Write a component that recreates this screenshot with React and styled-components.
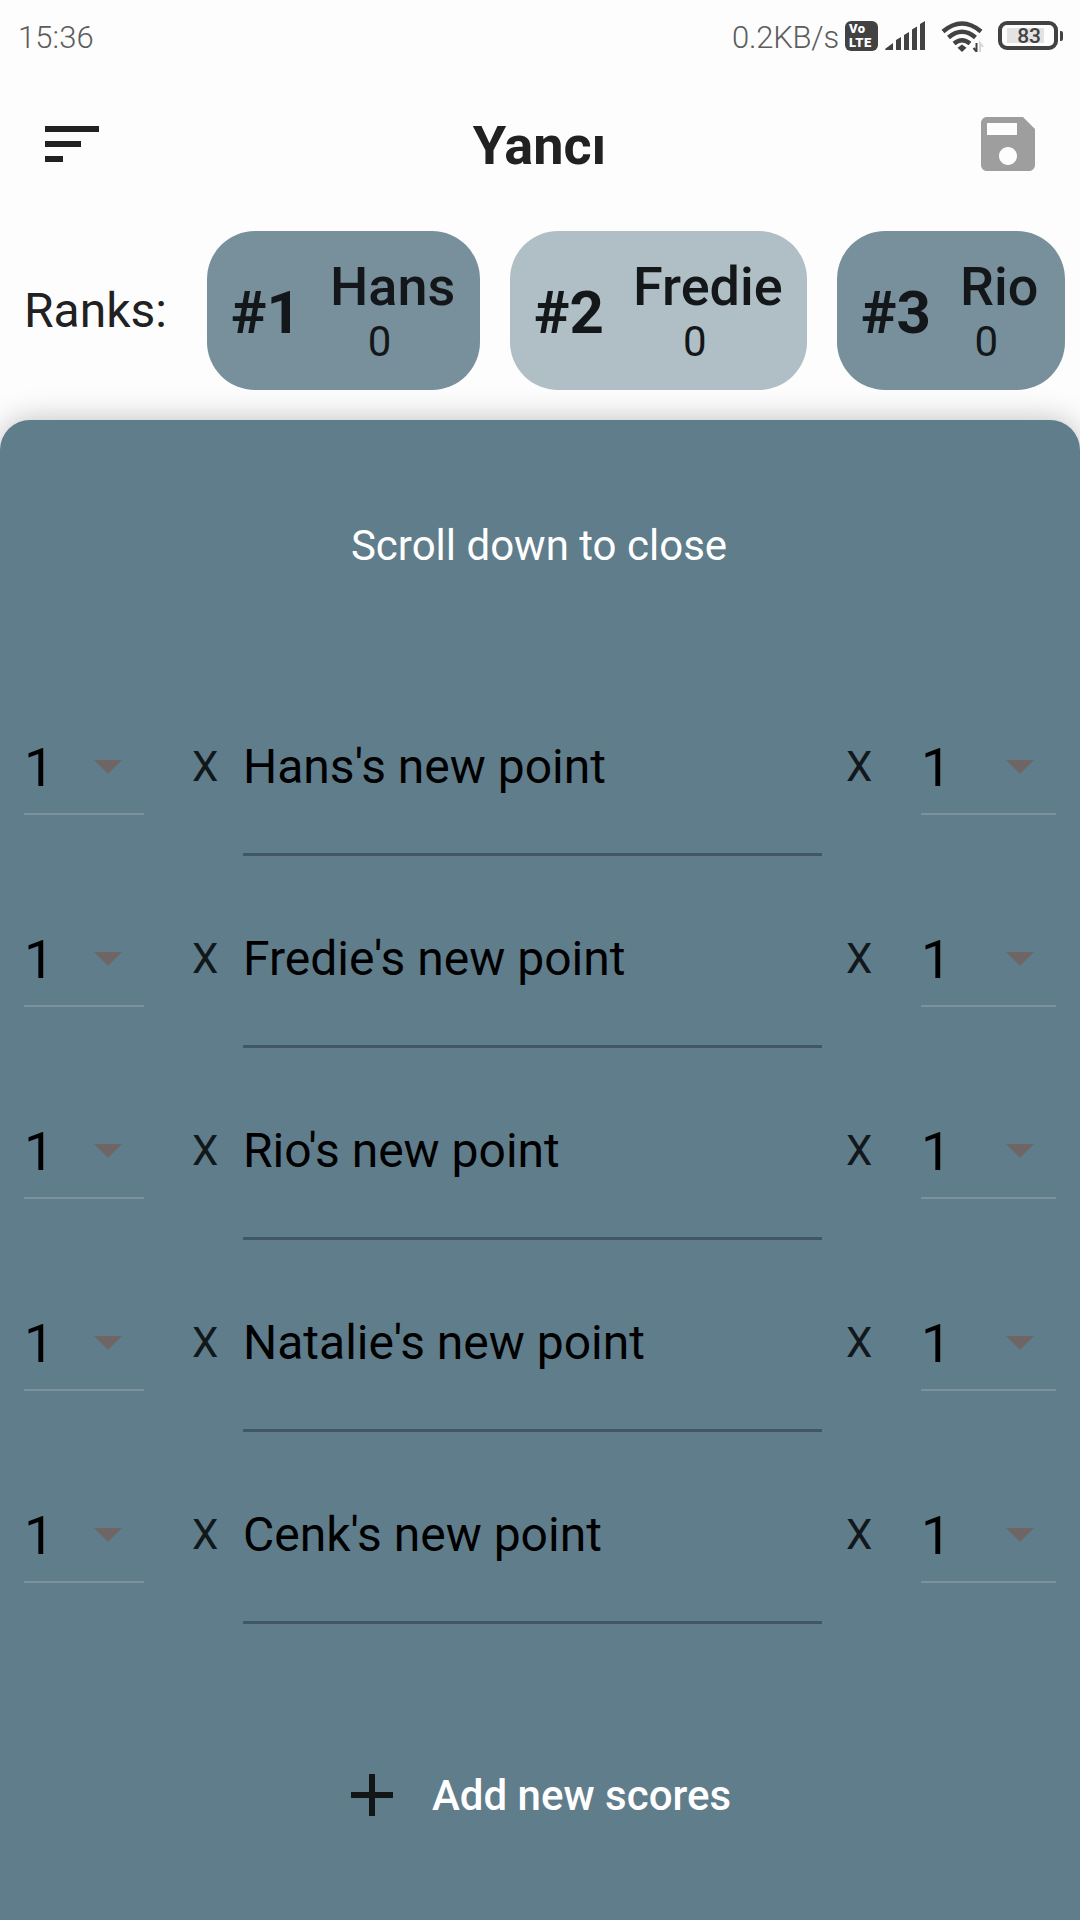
import React from "react";
import styled, { createGlobalStyle } from "styled-components";

const GlobalStyle = createGlobalStyle`
  * {
    box-sizing: border-box;
  }
  body {
    margin: 0;
    background-color: #fdfdfd;
    font-family: Roboto, sans-serif;
  }
`;

const Screen = styled.div`
  display: flex;
  flex-direction: column;
  width: 1080px;
  height: 1920px;
  overflow: hidden;
  color: #212121;
`;

const StatusBar = styled.header`
  display: flex;
  align-items: center;
  height: 72px;
  padding: 0 17px 0 18px;
  color: #5c5c5c;
  font-size: 31px;
  font-weight: 300;
  svg {
    display: block;
  }
`;

const Clock = styled.span`
  flex: 1;
  padding-top: 2px;
  letter-spacing: 0.1px;
`;

const NetSpeed = styled.span`
  padding-top: 2px;
  margin-right: 6px;
  letter-spacing: -0.2px;
`;

const VolteBadge = styled.div`
  display: flex;
  flex-direction: column;
  width: 33px;
  height: 30px;
  margin-right: 7px;
  padding: 1px 0 0 4px;
  border-radius: 6px;
  background-color: #424242;
  color: #fff;
  font-size: 13px;
  font-weight: 900;
  line-height: 14px;
  letter-spacing: 0.5px;
`;

const Battery = styled.div`
  display: flex;
  align-items: center;
  margin-left: 14px;
  margin-top: -1px;
  &::after {
    content: "";
    width: 3px;
    height: 10px;
    margin-left: 2px;
    border-radius: 0 2px 2px 0;
    background-color: #424242;
  }
`;

const BatteryBody = styled.div`
  display: flex;
  align-items: center;
  width: 60px;
  height: 29px;
  padding: 0 5px;
  border: 4px solid #424242;
  border-radius: 9px;
`;

const BatteryLevel = styled.div`
  display: flex;
  justify-content: flex-end;
  width: 37px;
  height: 15px;
  padding-right: 3px;
  background-color: #e3e3e3;
  color: #424242;
  font-size: 21px;
  font-weight: 500;
  line-height: 16px;
`;

const AppBar = styled.nav`
  display: grid;
  grid-template-columns: 72px 1fr 72px;
  align-items: center;
  height: 144px;
  padding: 0 36px;
  h1 {
    margin: 0;
    padding: 4px 1px 0 0;
    font-size: 54px;
    font-weight: 700;
    line-height: 64px;
    text-align: center;
  }
`;

const Icon = styled.svg`
  display: block;
  width: 72px;
  height: 72px;
  fill: ${(props) => props.$color};
`;

const Ranks = styled.section`
  display: flex;
  align-items: center;
  height: 204px;
  padding: 0 0 15px 24px;
`;

const RanksLabel = styled.span`
  width: 183px;
  font-size: 48px;
`;

const ChipList = styled.div`
  display: flex;
  gap: 30px;
`;

const Chip = styled.div`
  display: flex;
  align-items: center;
  flex-shrink: 0;
  width: ${(props) => props.$width}px;
  height: 159px;
  padding-left: 24px;
  border-radius: 48px;
  background-color: ${(props) => (props.$light ? "#b0bec5" : "#78909c")};
  color: #131719;
`;

const Place = styled.strong`
  width: 99px;
  padding-top: 4px;
  font-size: 60px;
  font-weight: 700;
`;

const Player = styled.div`
  display: flex;
  flex-direction: column;
  align-items: center;
  b {
    font-size: 54px;
    font-weight: 500;
    line-height: 62px;
  }
  span {
    padding-top: 1px;
    padding-right: 26px;
    font-size: 42px;
    line-height: 46px;
  }
`;

const Sheet = styled.main`
  display: flex;
  flex-direction: column;
  flex: 1;
  border-radius: 30px 30px 0 0;
  background-color: #607d8b;
  box-shadow: 0 0 30px rgba(0, 0, 0, 0.25);
`;

const Hint = styled.p`
  margin: 0;
  padding: 101px 2px 0 0;
  height: 252px;
  color: #fff;
  font-size: 42px;
  line-height: 50px;
  text-align: center;
`;

const ScoreRow = styled.div`
  display: grid;
  grid-template-columns: 120px 99px 579px 99px 135px;
  align-items: start;
  height: 192px;
  padding: 0 24px;
  color: #000;
`;

const Multiplier = styled.div`
  display: flex;
  align-items: center;
  justify-content: space-between;
  height: 95px;
  margin-top: 48px;
  padding: 0 22px 0 0;
  border-bottom: 2px solid #7b919d;
  font-size: 54px;
  line-height: 95px;
  span {
    padding-top: 1px;
  }
  &::after {
    content: "";
    border: 14px solid transparent;
    border-top-color: #6e6665;
    border-bottom: 0;
  }
`;

const Times = styled.span`
  padding-top: 70px;
  padding-left: ${(props) => props.$left}px;
  color: #10181b;
  font-size: 42px;
  line-height: 50px;
`;

const PointField = styled.div`
  height: 184px;
  padding-top: 67px;
  border-bottom: 3px solid #425765;
  font-size: 48px;
  line-height: 56px;
`;

const AddButton = styled.button`
  display: flex;
  align-items: center;
  align-self: flex-start;
  gap: 24px;
  margin: 127px 0 0 336px;
  padding: 0;
  border: none;
  background: none;
  color: #fff;
  font-family: inherit;
  font-size: 42px;
  font-weight: 500;
  cursor: pointer;
`;

const Wifi = styled.svg`
  margin-left: 15px;
  fill: none;
  stroke: #424242;
  stroke-width: 4.5px;
  .arrow {
    stroke-width: 2px;
  }
  .idle {
    stroke: #d6d6d6;
  }
`;

const players = [
  { name: "Hans", score: 0, width: 273 },
  { name: "Fredie", score: 0, width: 297 },
  { name: "Rio", score: 0, width: 228 },
  { name: "Natalie", score: 0, width: 310 },
  { name: "Cenk", score: 0, width: 273 },
];

function SignalIcon() {
  return (
    <svg width="41" height="30" fill="#424242">
      <path d="M0 28L8 22V29H1Q0 29 0 28ZM11 19L16 16V29H11ZM19 14L24 11V29H19ZM27 8.500L32 5.500V29H27ZM35 3L40 0V29H35Z" />
    </svg>
  );
}

function WifiIcon() {
  return (
    <Wifi width="43" height="34">
      <path d="M2 12.500Q21 -3.500 40 12.500M7.500 18.500Q21 7 34.500 18.500M13 24.500Q21 18 29 24.500" />
      <path
        d="M21 25.500l4.500 3.200-4.500 4.300-4.500-4.300z"
        fill="#424242"
        stroke="none"
      />
      <path className="arrow" d="M35.500 24v9M32.500 29l3 3.500" />
      <path className="arrow idle" d="M39 33v-9l3 4" />
    </Wifi>
  );
}

export default function App() {
  return (
    <Screen>
      <GlobalStyle />
      <StatusBar>
        <Clock>15:36</Clock>
        <NetSpeed>0.2KB/s</NetSpeed>
        <VolteBadge>
          <span>Vo</span>
          <span>LTE</span>
        </VolteBadge>
        <SignalIcon />
        <WifiIcon />
        <Battery>
          <BatteryBody>
            <BatteryLevel>83</BatteryLevel>
          </BatteryBody>
        </Battery>
      </StatusBar>
      <AppBar>
        <Icon viewBox="0 0 24 24" $color="#212121">
          <path d="M3 18h6v-2H3v2zM3 6v2h18V6H3zm0 7h12v-2H3v2z" />
        </Icon>
        <h1>Yancı</h1>
        <Icon viewBox="0 0 24 24" $color="#9e9e9e">
          <path d="M17 3H5c-1.110 0-2 .9-2 2v14c0 1.100.89 2 2 2h14c1.100 0 2-.9 2-2V7l-4-4zm-5 16c-1.660 0-3-1.340-3-3s1.340-3 3-3 3 1.340 3 3-1.340 3-3 3zm3-10H5V5h10v4z" />
        </Icon>
      </AppBar>
      <Ranks>
        <RanksLabel>Ranks:</RanksLabel>
        <ChipList>
          {players.slice(0, 3).map((player, i) => (
            <Chip key={player.name} $width={player.width} $light={i % 2 === 1}>
              <Place>#{i + 1}</Place>
              <Player>
                <b>{player.name}</b>
                <span>{player.score}</span>
              </Player>
            </Chip>
          ))}
        </ChipList>
      </Ranks>
      <Sheet>
        <Hint>Scroll down to close</Hint>
        {players.map((player) => (
          <ScoreRow key={player.name}>
            <Multiplier>
              <span>1</span>
            </Multiplier>
            <Times $left={48}>X</Times>
            <PointField>{player.name}'s new point</PointField>
            <Times $left={24}>X</Times>
            <Multiplier>
              <span>1</span>
            </Multiplier>
          </ScoreRow>
        ))}
        <AddButton type="button">
          <Icon viewBox="0 0 24 24" $color="#121617">
            <path d="M19 13h-6v6h-2v-6H5v-2h6V5h2v6h6v2z" />
          </Icon>
          Add new scores
        </AddButton>
      </Sheet>
    </Screen>
  );
}
